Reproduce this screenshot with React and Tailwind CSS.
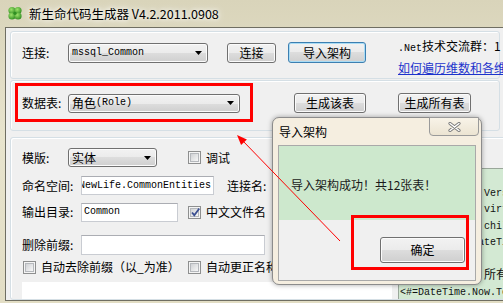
import React from 'react'

const cjk = "font-['Noto_Sans_CJK_SC',sans-serif]"
const mono = "font-['Liberation_Mono','Noto_Sans_CJK_SC',monospace]"

// Win7 风格按钮
function Btn({ children, className = '', primary = false }) {
  return (
    <div
      className={`flex items-center justify-center rounded-[3px] border text-[12px] leading-[14px] text-black bg-[linear-gradient(#f2f2f2,#ebebeb_50%,#dddddd_50%,#cfcfcf)] ${
        primary
          ? 'border-[#3c7fb1] shadow-[inset_0_0_0_1px_#a9dcf5]'
          : 'border-[#707070] shadow-[inset_0_0_0_1px_#fbfbfb]'
      } ${className}`}
    >
      {children}
    </div>
  )
}

function Combo({ children, className = '' }) {
  return (
    <div
      className={`flex items-center rounded-[3px] border border-[#707070] bg-[linear-gradient(#f2f2f2,#ebebeb_50%,#dddddd_50%,#cfcfcf)] shadow-[inset_0_0_0_1px_#fbfbfb] pl-[3px] pr-[5px] ${className}`}
    >
      <div className="flex flex-1 items-center whitespace-nowrap leading-[14px]">{children}</div>
      <svg width="7" height="4" viewBox="0 0 7 4">
        <path d="M0 0h7L3.5 4z" fill="#000" />
      </svg>
    </div>
  )
}

function Check({ checked = false }) {
  return (
    <span className="flex h-[13px] w-[13px] items-center justify-center border border-[#8e8f8f] bg-[#f4f4f4]">
      <span className="relative block h-[9px] w-[9px] border border-[#b5b8bc] bg-[linear-gradient(135deg,#d0d2d5,#f7f7f7)]">
        {checked && (
          <svg className="absolute -left-[1px] -top-[2px]" width="11" height="11" viewBox="0 0 11 11">
            <path d="M2 5.5L4.3 8.2L9.3 1.5" fill="none" stroke="#3b4f91" strokeWidth="1.8" />
          </svg>
        )}
      </span>
    </span>
  )
}

function Input({ children, className = '' }) {
  return (
    <div
      className={`flex items-center overflow-hidden whitespace-nowrap border border-[#c9ccd2] border-t-[#abadb3] bg-white pl-[2px] leading-[14px] ${className}`}
    >
      {children}
    </div>
  )
}

function Label({ children, className = '' }) {
  return <div className={`text-[12px] leading-[14px] text-black ${className}`}>{children}</div>
}

function Clover() {
  return (
    <svg width="16" height="15" viewBox="0 0 16 15">
      <defs>
        <radialGradient id="lf" cx="40%" cy="35%" r="70%">
          <stop offset="0" stopColor="#9ce36a" />
          <stop offset="1" stopColor="#2c8a1f" />
        </radialGradient>
      </defs>
      <circle cx="5" cy="4.6" r="3.6" fill="url(#lf)" />
      <circle cx="11" cy="4.6" r="3.6" fill="url(#lf)" />
      <circle cx="5" cy="10" r="3.6" fill="url(#lf)" />
      <circle cx="11" cy="10" r="3.6" fill="url(#lf)" />
      <circle cx="8" cy="7.3" r="1.6" fill="#2f8f22" />
    </svg>
  )
}

// 模板编辑框（右侧）
const CODE = [
  ['<#@ template', ''],
  ['<#@template   ', 'Version="2.0"'],
  ['    protected ', 'virtual void'],
  ['<#@ assembly  ', 'children'],
  ['// Generate Da', 'teTime'],
  ['', ''],
  ['//  本文件版权', '所有'],
]

export default function App() {
  return (
    <div
      className={`relative h-[303px] w-[503px] overflow-hidden bg-[linear-gradient(180deg,#d9d4ba,#e8e4cd_45%,#e2ddc4)] ${cjk}`}
    >
      {/* 标题栏 */}
      <div className="flex h-[27px] items-center pl-[7px]">
        <Clover />
        <span className="ml-[6px] text-[12.5px] leading-[15px] text-black [text-shadow:0_0_4px_#fff,0_0_8px_#fff]">
          新生命代码生成器 V4.2.2011.0908
        </span>
      </div>

      {/* 客户区 */}
      <div className="ml-[5px] h-[274px] border-y border-l border-[#6f6e62] bg-[#f0f0f0] pl-[4px] pt-[3px]">
        {/* 连接 */}
        <div className="flex h-[48px] w-[490px] items-start rounded-[3px] border border-[#d5dfe5] pl-[11px] pt-[4px] shadow-[inset_1px_1px_0_#fff]">
          <div className="mt-[6px] flex items-center">
            <Label className="w-[46px]">连接:</Label>
            <Combo className={`h-[20px] w-[140px] ${mono} text-[10px]`}>mssql_Common</Combo>
            <Btn className="ml-[19px] h-[20px] w-[49px]">连接</Btn>
            <Btn primary className="ml-[12px] h-[21px] w-[78px]">导入架构</Btn>
          </div>
          <div className="ml-[32px] flex flex-col whitespace-nowrap text-[12px] leading-[19px]">
            <span className="text-black">
              <span className={`${mono} text-[10px]`}>.Net</span>技术交流群：1
            </span>
            <span className="text-[#1c33cc] underline">如何遍历维数和各维</span>
          </div>
        </div>

        {/* 数据表 */}
        <div className="mt-[1px] flex h-[51px] w-[490px] items-start rounded-[3px] border border-[#d5dfe5] pl-[11px] pt-[12px] shadow-[inset_1px_1px_0_#fff]">
          <div className="flex h-[20px] items-center">
            <Label className="w-[46px]">数据表:</Label>
            <Combo className="h-[19px] w-[172px]">
              <span className="text-[12px]">角色</span>
              <span className={`${mono} text-[10px]`}>(Role)</span>
            </Combo>
            <Btn className="ml-[54px] h-[20px] w-[72px]">生成该表</Btn>
            <Btn className="ml-[32px] h-[20px] w-[73px]">生成所有表</Btn>
          </div>
        </div>

        {/* 设置 */}
        <div className="mt-[6px] flex h-[163px] w-[497px] rounded-[3px] border border-[#d5dfe5] shadow-[inset_1px_1px_0_#fff]">
          <div className="flex w-[387px] flex-col pl-[11px] pt-[10px]">
            <div className="flex h-[20px] items-center">
              <Label className="w-[46px]">模版:</Label>
              <Combo className="h-[19px] w-[89px]">
                <span className="text-[12px]">实体</span>
              </Combo>
              <span className="ml-[31px]">
                <Check />
              </span>
              <Label className="ml-[5px]">调试</Label>
            </div>
            <div className="mt-[8px] flex h-[20px] items-center">
              <Label className="w-[59px]">命名空间:</Label>
              <Input className={`h-[19px] w-[133px] ${mono} text-[10px]`}>
                <span className="-ml-[5px]">NewLife.CommonEntities</span>
              </Input>
              <Label className="ml-[13px]">连接名:</Label>
              <Input className="ml-[6px] h-[19px] w-[110px]" />
            </div>
            <div className="mt-[7px] flex h-[20px] items-center">
              <Label className="w-[59px]">输出目录:</Label>
              <Input className={`h-[19px] w-[97px] ${mono} text-[10px]`}>Common</Input>
              <span className="ml-[10px]">
                <Check checked />
              </span>
              <Label className="ml-[5px]">中文文件名</Label>
            </div>
            <div className="mt-[13px] flex h-[20px] items-center">
              <Label className="w-[59px]">删除前缀:</Label>
              <Input className="h-[20px] w-[184px]" />
            </div>
            <div className="mt-[5px] flex h-[14px] items-center">
              <div className="flex w-[166px] items-center">
                <span className="ml-[1px]">
                  <Check />
                </span>
                <Label className="ml-[5px] whitespace-nowrap">自动去除前缀（以_为准）</Label>
              </div>
              <Check />
              <Label className="ml-[5px]">自动更正名称</Label>
            </div>
            <div className="mt-[8px] h-[17px] w-[370px] bg-white" />
          </div>
          <div className="mt-[30px] h-[131px] w-[106px] overflow-hidden border-l border-t border-[#9aa79a] bg-[#d3e9d3] pl-[1px]">
            <div className={`${mono} text-[10px] leading-[16.5px] text-[#111]`}>
              {CODE.map(([a, b], i) => (
                <div key={i} className="flex h-[16.5px] whitespace-nowrap">
                  <span className="inline-block w-[84px] shrink-0 overflow-hidden">{a}</span>
                  <span className={/[\u4e00-\u9fa5]/.test(b) ? 'text-[12px]' : ''}>{b}</span>
                </div>
              ))}
              <div className="whitespace-nowrap">{'<#=DateTime.Now.ToString()#>'}</div>
            </div>
          </div>
        </div>
      </div>

      {/* 导入架构 对话框 */}
      <div className="absolute left-[272px] top-[117px] flex h-[168px] w-[210px] flex-col rounded-[7px] border border-[#8c8c8c] bg-[#f5eee0] shadow-[0_0_5px_rgba(0,0,0,0.35)]">
        <div className="flex h-[27px] items-center pl-[6px] text-[12px] leading-[14px] text-black">导入架构</div>
        <div className="absolute left-[156px] top-[-1px] flex h-[19px] w-[50px] items-center justify-center rounded-b-[4px] border border-[#9a9a9a] bg-[linear-gradient(#f8f3e8,#ece4d2)]">
          <svg width="13" height="10" viewBox="0 0 13 10">
            <path d="M2 1.5L11 8.5M11 1.5L2 8.5" stroke="#7a7a7a" strokeWidth="3.2" strokeLinecap="round" />
            <path d="M2 1.5L11 8.5M11 1.5L2 8.5" stroke="#fff" strokeWidth="1.4" strokeLinecap="round" />
          </svg>
        </div>
        <div className="mx-[5px] flex flex-col border border-[#a9a9a9]">
          <div className="h-[74px] bg-[#cde8cd] pl-[12px] pt-[32px] text-[12px] leading-[14px] text-[#1a1a1a]">
            导入架构成功！共12张表！
          </div>
          <div className="flex h-[60px] justify-end bg-[#f0f0f0] pr-[10px] pt-[17px]">
            <Btn className="h-[26px] w-[85px]">确定</Btn>
          </div>
        </div>
      </div>

      {/* 标注：红框与箭头 */}
      <div className="pointer-events-none absolute left-[15px] top-[83px] h-[39px] w-[238px] border-[3px] border-[#f00]" />
      <div className="pointer-events-none absolute left-[351px] top-[215px] h-[55px] w-[118px] border-[3px] border-[#f00]" />
      <svg className="pointer-events-none absolute left-0 top-0" width="503" height="303" viewBox="0 0 503 303">
        <line x1="340" y1="241" x2="242" y2="140" stroke="#f00" strokeWidth="1" />
        <polygon points="237,135 246.9,139.4 241.1,145" fill="#f00" />
      </svg>
    </div>
  )
}
